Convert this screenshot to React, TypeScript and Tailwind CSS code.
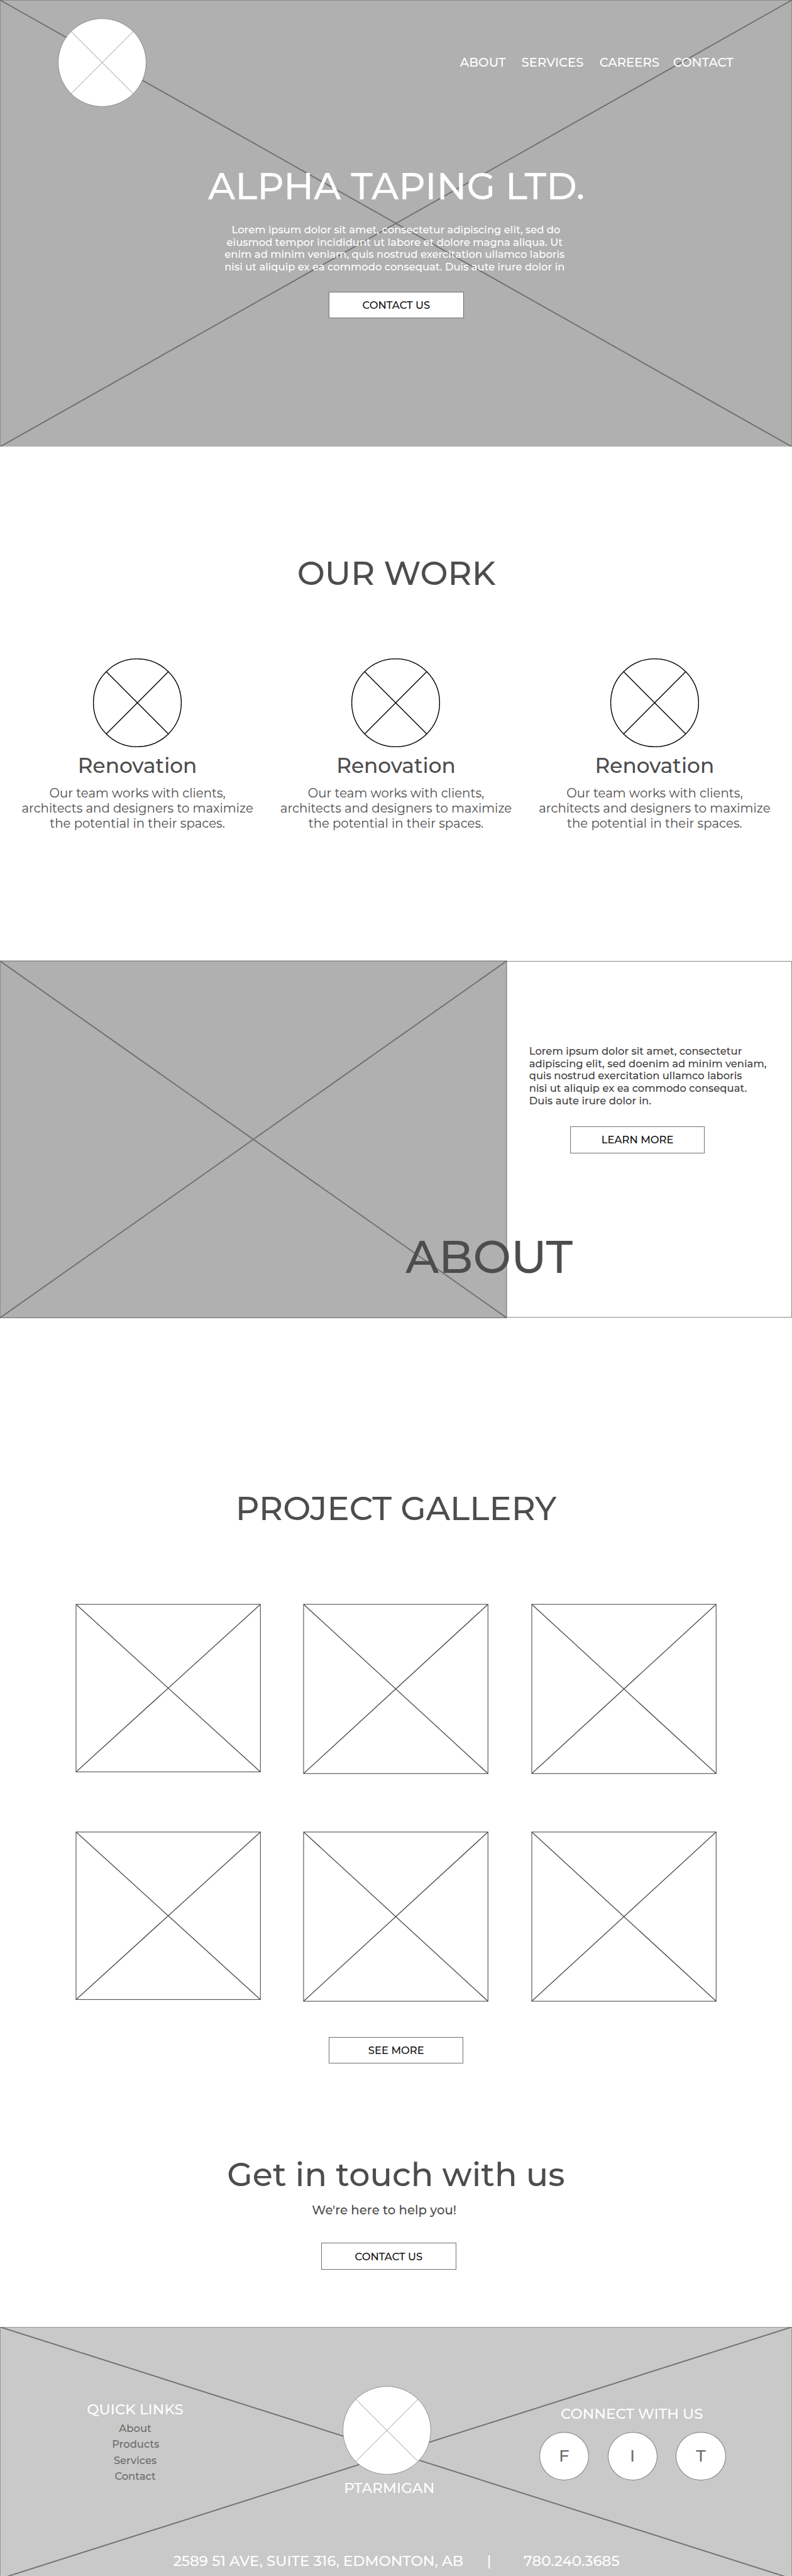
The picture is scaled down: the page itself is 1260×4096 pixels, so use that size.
import type { ReactNode } from "react";

type BoxProps = { className: string; stroke: string; width?: number };

/** Rectangle outline with both diagonals, stretched over its parent. */
function CrossBox({ className, stroke, width = 1 }: BoxProps) {
  return (
    <svg className={className} aria-hidden="true">
      <rect width="100%" height="100%" fill="none" stroke={stroke} strokeWidth="1.1" />
      <line x1="0" y1="0" x2="100%" y2="100%" stroke={stroke} strokeWidth={width} />
      <line x1="100%" y1="0" x2="0" y2="100%" stroke={stroke} strokeWidth={width} />
    </svg>
  );
}

/** Circle with two diagonals that end on its edge. */
function CrossCircle({ stroke, width, fill }: { stroke: string; width: number; fill: string }) {
  return (
    <svg
      className="block size-[141px] shrink-0"
      viewBox="0 0 141 141"
      fill="none"
      stroke={stroke}
      strokeWidth={width}
      aria-hidden="true"
    >
      <circle cx="70.5" cy="70.5" r="69.9" fill={fill} />
      <path d="M21.1 21.1 L119.9 119.9 M119.9 21.1 L21.1 119.9" />
    </svg>
  );
}

function Button({ children }: { children: ReactNode }) {
  return (
    <button className="flex h-[42.6px] w-[214.4px] items-center justify-center border border-[#707070] bg-white text-[16.4px] leading-5 font-medium text-[#111111]">
      {children}
    </button>
  );
}

function Hero() {
  return (
    <section className="relative h-[710.4px] bg-[#b0b0b0]">
      <CrossBox className="absolute inset-0 size-full" stroke="#707070" width={1.9} />
      <div className="relative flex flex-col items-center text-white">
        <header className="flex w-full items-center pt-[28.9px] pl-[92.4px]">
          <CrossCircle stroke="#707070" width={0.7} fill="#ffffff" />
          <nav className="ml-[498.4px] flex text-[19.69px] leading-5 font-medium">
            <a className="w-[97.7px]">ABOUT</a>
            <a className="w-[124.2px]">SERVICES</a>
            <a className="w-[117px]">CAREERS</a>
            <a>CONTACT</a>
          </nav>
        </header>
        <h1 className="mt-[96.3px] pl-[1.2px] text-[59.06px] leading-[60px] font-medium">ALPHA TAPING LTD.</h1>
        <p className="mt-[29.9px] text-center text-[16.4px] leading-[19.68px] font-medium whitespace-pre">
          {"Lorem ipsum dolor sit amet, consectetur adipiscing elit, sed do"}
          <br />
          {"eiusmod tempor incididunt ut labore et dolore magna aliqua. Ut\u00a0"}
          <br />
          {"enim ad minim veniam, quis nostrud exercitation ullamco laboris\u00a0"}
          <br />
          {"nisi ut aliquip ex ea commodo consequat. Duis aute irure dolor in\u00a0"}
        </p>
        <div className="mt-[28.7px] pl-[0.8px]">
          <Button>CONTACT US</Button>
        </div>
      </div>
    </section>
  );
}

function Work() {
  return (
    <section className="flex h-[817.6px] flex-col items-center pt-[170.2px] text-[#4d4d4d]">
      <h2 className="pl-[1.2px] text-[52.5px] leading-[60px] font-medium">OUR WORK</h2>
      <div className="mt-[106.7px] flex">
        {[0, 1, 2].map((i) => (
          <article key={i} className="flex w-[411.4px] flex-col items-center">
            <CrossCircle stroke="#000000" width={1.4} fill="none" />
            <h3 className="mt-[8.5px] text-[32.8px] leading-10 font-medium">Renovation</h3>
            <p className="mt-[12.3px] text-center text-[19.69px] leading-[24.15px]">
              Our team works with clients,
              <br />
              architects and designers to maximize
              <br />
              the potential in their spaces.
            </p>
          </article>
        ))}
      </div>
    </section>
  );
}

function About() {
  return (
    <section className="relative flex h-[567.4px]">
      <div className="relative w-[806px] shrink-0 bg-[#b0b0b0]">
        <CrossBox className="absolute inset-0 size-full overflow-visible" stroke="#707070" width={1.9} />
      </div>
      <div className="flex grow flex-col border border-l-0 border-[#8a8a8a] pt-[133.1px] pl-[35.8px]">
        <p className="text-[16.4px] leading-[19.68px] font-medium whitespace-nowrap text-[#404040]">
          Lorem ipsum dolor sit amet, consectetur
          <br />
          adipiscing elit, sed doenim ad minim veniam,
          <br />
          quis nostrud exercitation ullamco laboris
          <br />
          nisi ut aliquip ex ea commodo consequat.
          <br />
          Duis aute irure dolor in.
        </p>
        <div className="mt-[30.5px] ml-[65.2px]">
          <Button>LEARN MORE</Button>
        </div>
      </div>
      <h2 className="absolute top-[429.9px] left-[645.2px] text-[72px] leading-[80px] font-medium text-[#4d4d4d]">
        ABOUT
      </h2>
    </section>
  );
}

function Gallery() {
  return (
    <section className="flex flex-col items-center pt-[272.4px]">
      <h2 className="text-[52.5px] leading-[60px] font-medium text-[#4d4d4d]">PROJECT GALLERY</h2>
      <div className="mt-[123.6px] grid grid-cols-[293.3px_293.3px_293.3px] grid-rows-[269.1px_269.1px] gap-x-[69px] gap-y-[92.7px]">
        {["short", "tall", "tall", "short", "tall", "tall"].map((kind, i) => (
          <CrossBox
            key={i}
            className={kind === "short" ? "block h-[266.4px] w-full overflow-visible" : "block size-full overflow-visible"}
            stroke="#4d4d4d"
            width={1.35}
          />
        ))}
      </div>
      <div className="mt-[56.4px] pl-[0.6px]">
        <Button>SEE MORE</Button>
      </div>
    </section>
  );
}

function Contact() {
  return (
    <section className="flex flex-col items-center pt-[145.5px] text-[#4d4d4d]">
      <h2 className="text-[52.5px] leading-[60px] font-medium">Get in touch with us</h2>
      <p className="mt-[15.2px] mr-[37.6px] text-[19.69px] leading-6 font-medium">We're here to help you!</p>
      <div className="mt-[40.4px] mr-[23.2px]">
        <Button>CONTACT US</Button>
      </div>
    </section>
  );
}

function Footer() {
  return (
    <footer className="relative mt-[91.5px] h-[396px] overflow-hidden bg-[#c9c9c9] font-medium text-white">
      <CrossBox className="absolute inset-x-0 top-0 h-[400.4px] w-full" stroke="#707070" width={1.9} />
      <div className="relative flex h-[357.4px] text-[22.97px] leading-7">
        <div className="flex w-[430.2px] flex-col items-center pt-[116.4px]">
          <h4>QUICK LINKS</h4>
          <ul className="mt-[3.9px] text-center text-[16.4px] leading-[25.6px] text-[#6b6b6b]">
            <li>About</li>
            <li className="pl-[1.4px]">Products</li>
            <li>Services</li>
            <li>Contact</li>
          </ul>
        </div>
        <div className="flex w-[378.2px] flex-col items-center pt-[93.3px]">
          <div className="mr-[7px]">
            <CrossCircle stroke="#707070" width={0.7} fill="#ffffff" />
          </div>
          <p className="mt-[6.9px]">PTARMIGAN</p>
        </div>
        <div className="flex w-[395.6px] flex-col items-center pt-[123.9px]">
          <h4 className="pr-[2px]">CONNECT WITH US</h4>
          <div className="mt-[14.4px] flex gap-[29.7px] text-[26.25px] leading-8 text-[#6b6b6b]">
            {["F", "I", "T"].map((letter) => (
              <a
                key={letter}
                className="flex h-[77.4px] w-[79.2px] items-center justify-center rounded-[50%] border-[0.7px] border-[#808080] bg-white"
              >
                {letter}
              </a>
            ))}
          </div>
        </div>
      </div>
      <div className="relative flex pl-[275.7px] text-[22.97px] leading-7 whitespace-pre">
        <span className="w-[499px]">2589 51 AVE, SUITE 316, EDMONTON, AB</span>
        <span className="w-[58.4px]">|</span>
        <span>780.240.3685</span>
      </div>
    </footer>
  );
}

export default function App() {
  return (
    <div className="h-[4096px] w-[1260px] overflow-hidden bg-white font-['Montserrat','Inter',sans-serif]">
      <Hero />
      <Work />
      <About />
      <Gallery />
      <Contact />
      <Footer />
    </div>
  );
}
